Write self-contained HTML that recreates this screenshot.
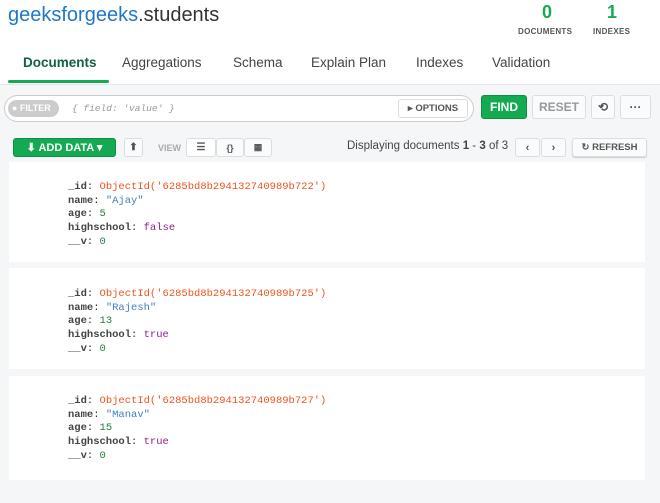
<!DOCTYPE html>
<html><head><style>
*{box-sizing:border-box;margin:0;padding:0}
body{width:660px;height:503px;background:#f5f6f7;font-family:"Liberation Sans",sans-serif;position:relative;overflow:hidden}
.abs{position:absolute}
.top{left:0;top:0;width:660px;height:162px;background:#fff}
.bar{left:0;top:84px;width:660px;height:78px;background:#f5f6f7;border-top:1px solid #e4e6e8}
.btn{position:absolute;border:1px solid #ddd;border-radius:3px;background:#fafbfc;font-size:11px;font-weight:bold;color:#555;display:flex;align-items:center;justify-content:center}
.card{position:absolute;left:9px;width:636px;background:#fff}
.mono{position:absolute;left:59px;font-family:"Liberation Mono",monospace;font-size:10.5px;line-height:13.7px;color:#333}
.k{font-weight:bold;color:#444}
.o{color:#f0541e}.s{color:#3e7fbf}.n{color:#257a40}.b{color:#8c1f8c}
</style></head><body>
<div class="abs top"></div>
<div class="abs" style="left:8px;top:4px;font-size:20px;color:#333"><span style="color:#1f77c8">geeksforgeeks</span>.students</div>
<div class="abs" style="left:542px;top:2px;font-size:18px;font-weight:bold;color:#13aa52">0</div>
<div class="abs" style="left:518px;top:27px;font-size:8px;font-weight:bold;color:#555;letter-spacing:.3px">DOCUMENTS</div>
<div class="abs" style="left:607px;top:2px;font-size:18px;font-weight:bold;color:#13aa52">1</div>
<div class="abs" style="left:593px;top:27px;font-size:8px;font-weight:bold;color:#555;letter-spacing:.3px">INDEXES</div>
<div class="abs" style="top:55px;left:23px;font-size:13.5px;font-weight:bold;color:#116149">Documents</div>
<div class="abs" style="top:55px;left:122px;font-size:13.5px;color:#444">Aggregations</div>
<div class="abs" style="top:55px;left:233px;font-size:13.5px;color:#444">Schema</div>
<div class="abs" style="top:55px;left:311px;font-size:13.5px;color:#444">Explain Plan</div>
<div class="abs" style="top:55px;left:416px;font-size:13.5px;color:#444">Indexes</div>
<div class="abs" style="top:55px;left:492px;font-size:13.5px;color:#444">Validation</div>
<div class="abs" style="left:8px;top:80px;width:101px;height:3px;background:#13aa52;border-radius:2px"></div>
<div class="abs bar"></div>
<div class="abs" style="left:4px;top:95px;width:470px;height:27px;border:1px solid #ccc;border-radius:14px;background:#fff"></div>
<div class="abs" style="left:8px;top:100px;width:51px;height:17px;border-radius:9px;background:#ccc;color:#fff;font-size:9px;font-weight:bold;line-height:17px;padding-left:4px">● FILTER</div>
<div class="abs" style="left:72px;top:103px;font-family:'Liberation Mono',monospace;font-style:italic;font-size:9.5px;color:#999">{ field: 'value' }</div>
<div class="btn" style="left:398px;top:99px;width:70px;height:19px;background:#fff;font-size:9.5px">▸ OPTIONS</div>
<div class="btn" style="left:481px;top:95px;width:46px;height:24px;background:#13aa52;border-color:#0f8f45;color:#fff;font-size:12px">FIND</div>
<div class="btn" style="left:532px;top:95px;width:54px;height:24px;color:#999;font-size:12px">RESET</div>
<div class="btn" style="left:591px;top:95px;width:24px;height:24px;font-size:12px">⟲</div>
<div class="btn" style="left:620px;top:95px;width:31px;height:24px;font-size:12px">···</div>
<div class="btn" style="left:13px;top:138px;width:103px;height:19px;background:#13aa52;border-color:#0f8f45;color:#fff;font-size:11px">⬇ ADD DATA ▾</div>
<div class="btn" style="left:124px;top:138px;width:19px;height:19px;font-size:10px">⬆</div>
<div class="abs" style="left:158px;top:143px;font-size:9px;color:#aaa;font-weight:bold">VIEW</div>
<div class="btn" style="left:186px;top:138px;width:30px;height:19px;background:#fff;font-size:10px">☰</div>
<div class="btn" style="left:216px;top:138px;width:28px;height:19px;font-size:9px">{}</div>
<div class="btn" style="left:244px;top:138px;width:28px;height:19px;font-size:9px">▦</div>
<div class="abs" style="left:347px;top:140px;font-size:11.5px;color:#444">Displaying documents <b>1</b> - <b>3</b> of 3</div>
<div class="btn" style="left:515px;top:138px;width:25px;height:19px;font-size:11px">‹</div>
<div class="btn" style="left:541px;top:138px;width:25px;height:19px;font-size:11px">›</div>
<div class="btn" style="left:572px;top:138px;width:75px;height:19px;font-size:9.5px;box-shadow:0 1px 1px #ccc">↻ REFRESH</div>
<div class="card" style="top:162px;height:100px"></div>
<div class="card" style="top:268px;height:101px"></div>
<div class="card" style="top:376px;height:104px"></div>
<div class="mono" style="top:181px;left:68px"><span class="k">_id</span>: <span class="o">ObjectId('6285bd8b294132740989b722')</span><br><span class="k">name</span>: <span class="s">"Ajay"</span><br><span class="k">age</span>: <span class="n">5</span><br><span class="k">highschool</span>: <span class="b">false</span><br><span class="k">__v</span>: <span class="n">0</span></div>
<div class="mono" style="top:288px;left:68px"><span class="k">_id</span>: <span class="o">ObjectId('6285bd8b294132740989b725')</span><br><span class="k">name</span>: <span class="s">"Rajesh"</span><br><span class="k">age</span>: <span class="n">13</span><br><span class="k">highschool</span>: <span class="b">true</span><br><span class="k">__v</span>: <span class="n">0</span></div>
<div class="mono" style="top:395px;left:68px"><span class="k">_id</span>: <span class="o">ObjectId('6285bd8b294132740989b727')</span><br><span class="k">name</span>: <span class="s">"Manav"</span><br><span class="k">age</span>: <span class="n">15</span><br><span class="k">highschool</span>: <span class="b">true</span><br><span class="k">__v</span>: <span class="n">0</span></div>
</body></html>
